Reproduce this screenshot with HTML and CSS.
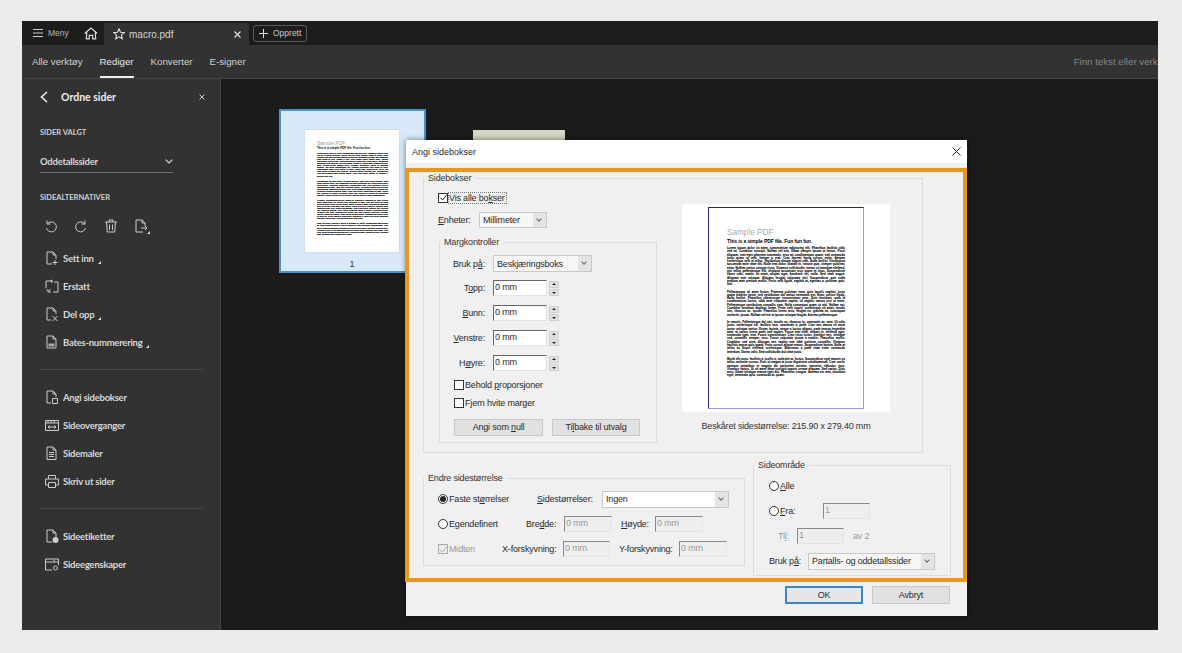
FILE: index.html
```html
<!DOCTYPE html>
<html lang="nb">
<head>
  <meta charset="UTF-8">
  <title>macro.pdf - Angi sidebokser</title>
  <link rel="stylesheet" href="styles.css">
</head>
<body>

<div class="app">

  <!-- Fanelinje -->
  <div class="topbar">
    <svg class="ico-menu" width="10" height="8" viewBox="0 0 10 8"><path d="M0 .5h10M0 4h10M0 7.500h10" stroke="#ccc" fill="none"/></svg>
    <span class="menu-text">Meny</span>
    <svg class="ico-home" width="14" height="13" viewBox="0 0 14 13"><path d="M.7 6.500 7 1l6.300 5.500M2.800 5.500 2.300 11.800h3V8.300h3.400v3.500h3l-.5-6.300" stroke="#ddd" stroke-width="1.200" fill="none"/></svg>
    <div class="tab">
      <svg width="12" height="12" viewBox="0 0 12 12"><path d="M6 .8 7.500 4.300l3.800.3-2.900 2.500.9 3.700L6 8.800l-3.300 2 .9-3.700L.7 4.600l3.800-.3z" stroke="#ddd" stroke-width="1.100" fill="none"/></svg>
      <span class="tab-name">macro.pdf</span>
      <svg class="tab-close" width="7" height="7" viewBox="0 0 7 7"><path d="M.5.5l6 6M6.500.5l-6 6" stroke="#ddd" stroke-width="1.200"/></svg>
    </div>
    <div class="create-btn">
      <svg width="9" height="9" viewBox="0 0 9 9"><path d="M4.500 0v9M0 4.500h9" stroke="#ddd"/></svg>
      <span>Opprett</span>
    </div>
  </div>

  <!-- Verktøylinje -->
  <div class="toolbar">
    <span class="tool">Alle verktøy</span>
    <span class="tool tool-active">Rediger</span>
    <span class="tool">Konverter</span>
    <span class="tool">E-signer</span>
    <span class="search">Finn tekst eller verktøy</span>
  </div>

  <div class="workspace">

    <!-- Sidepanel -->
    <aside class="sidebar">
      <div class="side-head">
        <svg width="8" height="12" viewBox="0 0 8 12"><path d="M7 1 1.500 6 7 11" stroke="#eee" stroke-width="1.600" fill="none"/></svg>
        <span class="side-title">Ordne sider</span>
        <svg class="side-close" width="6" height="6" viewBox="0 0 6 6"><path d="M.5.5l5 5M5.500.5l-5 5" stroke="#ccc"/></svg>
      </div>

      <div class="side-label first">SIDER VALGT</div>
      <div class="side-select">
        <span>Oddetallssider</span>
        <svg width="8" height="5" viewBox="0 0 8 5"><path d="M.7.7 4 4l3.300-3.300" stroke="#ddd" stroke-width="1.200" fill="none"/></svg>
      </div>

      <div class="side-label second">SIDEALTERNATIVER</div>
      <div class="side-icons">
        <svg width="14" height="14" viewBox="0 0 14 14"><path d="M3 1.500v3.500h3.500M3.300 5A5 5 0 1 1 2.500 9" stroke="#ccc" fill="none"/></svg>
        <svg width="14" height="14" viewBox="0 0 14 14"><path d="M11 1.500v3.500H7.500M10.700 5A5 5 0 1 0 11.500 9" stroke="#ccc" fill="none"/></svg>
        <svg width="14" height="14" viewBox="0 0 14 14"><path d="M1 3h12M5 3V1h4v2M2.500 3l.8 10h7.400l.8-10M5.500 5.500v5.500M8.500 5.500v5.500" stroke="#ccc" fill="none"/></svg>
        <svg width="16" height="15" viewBox="0 0 16 15"><path d="M9 13H2V1h6l3 3v3M8 1v3h3M7 9h6M11 7l2 2-2 2" stroke="#ccc" fill="none"/><path d="M16 12v3h-3z" fill="#ddd"/></svg>
      </div>

      <ul class="side-list">
        <li>
          <svg width="14" height="15" viewBox="0 0 14 15"><path d="M7 13H2V1h6l3 3v4M8 1v3h3M10 9v5M7.500 11.500h5" stroke="#ccc" fill="none"/></svg>
          <span class="more">Sett inn</span>
        </li>
        <li>
          <svg width="14" height="15" viewBox="0 0 14 15"><path d="M1 9V2h6M5 2l2-1v3M9 3h4v10H8M3 11v2h3M1.500 10l2 2 2-2" stroke="#ccc" fill="none"/></svg>
          <span>Erstatt</span>
        </li>
        <li>
          <svg width="14" height="15" viewBox="0 0 14 15"><path d="M6 13H2V1h6l3 3v3M8 1v3h3M7.500 9l5 5M12.500 9l-5 5" stroke="#ccc" fill="none"/></svg>
          <span class="more">Del opp</span>
        </li>
        <li>
          <svg width="14" height="15" viewBox="0 0 14 15"><path d="M11 13H2V1h6l3 3zM8 1v3h3" stroke="#ccc" fill="none"/><path d="M3.500 8.500h6v3h-6z" fill="#aaa"/></svg>
          <span class="more">Bates-nummerering</span>
        </li>
      </ul>
      <div class="side-rule"></div>

      <ul class="side-list">
        <li>
          <svg width="14" height="15" viewBox="0 0 14 15"><path d="M6 13H2V1h6l3 3v3M8 1v3h3M7.500 8.500h5v5h-5z" stroke="#ccc" fill="none"/></svg>
          <span>Angi sidebokser</span>
        </li>
        <li>
          <svg width="14" height="15" viewBox="0 0 14 15"><path d="M.5 2.500h13v10H.5zM.5 5h13M3 2.500V5M6 2.500V5M9 2.500V5M3 9h8M5 7.500 3 9l2 1.500M9 7.500 11 9l-2 1.500" stroke="#ccc" fill="none"/></svg>
          <span>Sideoverganger</span>
        </li>
        <li>
          <svg width="14" height="15" viewBox="0 0 14 15"><path d="M2 1h6l3 3v9.500H2zM8 1v3h3M4 6.500h5M4 8.500h5M4 10.500h5" stroke="#ccc" fill="none"/></svg>
          <span>Sidemaler</span>
        </li>
        <li>
          <svg width="14" height="15" viewBox="0 0 14 15"><path d="M3.500 5V1.500h7V5M3 11H.5V5h13v6H11M3.500 8.500h7v5h-7z" stroke="#ccc" fill="none"/></svg>
          <span>Skriv ut sider</span>
        </li>
      </ul>
      <div class="side-rule"></div>

      <ul class="side-list">
        <li>
          <svg width="14" height="15" viewBox="0 0 14 15"><path d="M7 13H2V1h6l3 3v4M8 1v3h3" stroke="#ccc" fill="none"/><circle cx="10.500" cy="11" r="3" fill="#ccc"/></svg>
          <span>Sideetiketter</span>
        </li>
        <li>
          <svg width="14" height="15" viewBox="0 0 14 15"><path d="M7 13H.5V2h13v6M.5 5h13M9 2.500V5" stroke="#ccc" fill="none"/><circle cx="10.500" cy="11" r="2" stroke="#ccc" fill="none"/></svg>
          <span>Sideegenskaper</span>
        </li>
      </ul>
    </aside>

    <!-- Sideoversikt -->
    <main class="pages">
      <div class="thumb">
        <div class="thumb-page">
          <div class="pdf-title">Sample PDF</div>
          <div class="pdf-sub">This is a simple PDF file. Fun fun fun.</div>
          <p>Lorem ipsum dolor sit amet, consectetuer adipiscing elit. Phasellus facilisis odio sed mi. Curabitur suscipit. Nullam vel nisi. Etiam semper ipsum ut lectus. Proin aliquam, erat eget pharetra commodo, eros mi condimentum quam, sed commodo justo quam ut velit. Integer a erat. Cras laoreet ligula cursus enim. Aenean scelerisque velit et tellus. Vestibulum dictum aliquet sem. Nulla facilisi. Vestibulum accumsan ante vitae elit. Nulla erat dolor, blandit in, rutrum quis, semper pulvinar, enim. Nullam varius congue risus. Vivamus sollicitudin, metus ut interdum eleifend, nisi tellus pellentesque elit, tristique accumsan eros quam et risus. Suspendisse libero odio, mattis sit amet, aliquet eget, hendrerit vel, nulla. Sed vitae augue. Aliquam erat volutpat. Aliquam feugiat vulputate nisl. Suspendisse quis nulla pretium ante pretium mollis. Proin velit ligula, sagittis at, egestas a, pulvinar quis, nisl.</p>
          <p>Pellentesque sit amet lectus. Praesent pulvinar, nunc quis iaculis sagittis, justo quam lobortis tortor, sed vestibulum dui metus venenatis est. Nunc cursus ligula. Nulla facilisi. Phasellus ullamcorper consectetuer ante. Duis tincidunt, urna id condimentum luctus, nibh ante vulputate sapien, id sagittis massa orci ut enim. Pellentesque vestibulum convallis sem. Nulla consequat quam ut nisl. Nullam est. Curabitur tincidunt dapibus lorem. Proin velit turpis, scelerisque sit amet, iaculis nec, rhoncus ac, ipsum. Phasellus lorem arcu, feugiat eu, gravida eu, consequat molestie, ipsum. Nullam vel est ut ipsum volutpat feugiat. Aenean pellentesque.</p>
          <p>In mauris. Pellentesque dui nisi, iaculis eu, rhoncus in, venenatis ac, ante. Ut odio justo, scelerisque vel, facilisis non, commodo a, pede. Cras nec massa sit amet tortor volutpat varius. Donec lacinia, neque a luctus aliquet, pede massa imperdiet ante, at varius lorem pede sed sapien. Fusce erat nibh, aliquet in, eleifend eget, commodo eget, erat. Fusce consectetuer. Cras risus tortor, porttitor nec, tristique sed, convallis semper, eros. Fusce vulputate ipsum a mauris. Phasellus mollis. Curabitur sed urna. Aliquam nec sapien non nibh pulvinar convallis. Vivamus facilisis augue quis quam. Proin cursus aliquet metus. Suspendisse lacinia. Nulla at tellus ac turpis eleifend scelerisque. Maecenas a pede vitae enim commodo interdum. Donec odio. Sed sollicitudin dui vitae justo.</p>
          <p>Morbi elit nunc, facilisis a, mollis a, molestie at, lectus. Suspendisse eget mauris eu tellus molestie cursus. Duis ut magna at justo dignissim condimentum. Cum sociis natoque penatibus et magnis dis parturient montes, nascetur ridiculus mus. Vivamus varius. Ut sit amet diam suscipit mauris ornare aliquam. Sed varius. Duis arcu. Etiam tristique massa eget dui. Phasellus congue. Aenean est erat, tincidunt eget, venenatis quis, commodo at, quam.</p>
        </div>
        <div class="thumb-no">1</div>
      </div>
      <div class="thumb-next"></div>
    </main>
  </div>

  <!-- Dialogvindu -->
  <div class="dialog">
    <div class="dialog-title">
      <span>Angi sidebokser</span>
      <svg width="9" height="9" viewBox="0 0 9 9"><path d="M.5.5l8 8M8.500.5l-8 8" stroke="#222"/></svg>
    </div>

    <div class="dialog-body">
      <fieldset class="group group-boxes">
        <legend>Sidebokser</legend>
        <div class="boxes-row">
          <div class="boxes-left">
            <div class="row row-show">
              <span class="check on"><svg width="9" height="9" viewBox="0 0 9 9"><path d="M1 4.500 3.500 7 8 1.500" stroke="#333" fill="none"/></svg></span>
              <span class="focus-label">Vis alle bo<u>k</u>ser</span>
            </div>
            <div class="row row-units">
              <span class="lbl-units"><u>E</u>nheter:</span>
              <div class="select sel-units"><span>Millimeter</span><b class="arrow"></b></div>
            </div>
            <fieldset class="group group-margins">
              <legend>Margkontroller</legend>
              <div class="row first-row">
                <span class="lbl-margin">Bruk p<u>å</u>:</span>
                <div class="select sel-apply"><span>Beskjæringsboks</span><b class="arrow"></b></div>
              </div>
              <div class="row field-row">
                <span class="lbl-margin">T<u>o</u>pp:</span>
                <div class="input in-margin">0 mm</div>
                <div class="spin"><i class="up"></i><i class="down"></i></div>
              </div>
              <div class="row field-row">
                <span class="lbl-margin"><u>B</u>unn:</span>
                <div class="input in-margin">0 mm</div>
                <div class="spin"><i class="up"></i><i class="down"></i></div>
              </div>
              <div class="row field-row">
                <span class="lbl-margin"><u>V</u>enstre:</span>
                <div class="input in-margin">0 mm</div>
                <div class="spin"><i class="up"></i><i class="down"></i></div>
              </div>
              <div class="row field-row">
                <span class="lbl-margin">H<u>ø</u>yre:</span>
                <div class="input in-margin">0 mm</div>
                <div class="spin"><i class="up"></i><i class="down"></i></div>
              </div>
              <div class="row check-row keep">
                <span class="check"></span><span class="check-text">Behold <u>p</u>roporsjoner</span>
              </div>
              <div class="row check-row trim">
                <span class="check"></span><span class="check-text">F<u>j</u>ern hvite marger</span>
              </div>
              <div class="row btn-row">
                <div class="btn btn-null">Angi som <u>n</u>ull</div>
                <div class="btn btn-back">Ti<u>l</u>bake til utvalg</div>
              </div>
            </fieldset>
          </div>

          <div class="preview-col">
            <div class="preview">
              <div class="preview-page">
                <div class="pdf-title">Sample PDF</div>
                <div class="pdf-sub">This is a simple PDF file. Fun fun fun.</div>
                <p>Lorem ipsum dolor sit amet, consectetuer adipiscing elit. Phasellus facilisis odio sed mi. Curabitur suscipit. Nullam vel nisi. Etiam semper ipsum ut lectus. Proin aliquam, erat eget pharetra commodo, eros mi condimentum quam, sed commodo justo quam ut velit. Integer a erat. Cras laoreet ligula cursus enim. Aenean scelerisque velit et tellus. Vestibulum dictum aliquet sem. Nulla facilisi. Vestibulum accumsan ante vitae elit. Nulla erat dolor, blandit in, rutrum quis, semper pulvinar, enim. Nullam varius congue risus. Vivamus sollicitudin, metus ut interdum eleifend, nisi tellus pellentesque elit, tristique accumsan eros quam et risus. Suspendisse libero odio, mattis sit amet, aliquet eget, hendrerit vel, nulla. Sed vitae augue. Aliquam erat volutpat. Aliquam feugiat vulputate nisl. Suspendisse quis nulla pretium ante pretium mollis. Proin velit ligula, sagittis at, egestas a, pulvinar quis, nisl.</p>
                <p>Pellentesque sit amet lectus. Praesent pulvinar, nunc quis iaculis sagittis, justo quam lobortis tortor, sed vestibulum dui metus venenatis est. Nunc cursus ligula. Nulla facilisi. Phasellus ullamcorper consectetuer ante. Duis tincidunt, urna id condimentum luctus, nibh ante vulputate sapien, id sagittis massa orci ut enim. Pellentesque vestibulum convallis sem. Nulla consequat quam ut nisl. Nullam est. Curabitur tincidunt dapibus lorem. Proin velit turpis, scelerisque sit amet, iaculis nec, rhoncus ac, ipsum. Phasellus lorem arcu, feugiat eu, gravida eu, consequat molestie, ipsum. Nullam vel est ut ipsum volutpat feugiat. Aenean pellentesque.</p>
                <p>In mauris. Pellentesque dui nisi, iaculis eu, rhoncus in, venenatis ac, ante. Ut odio justo, scelerisque vel, facilisis non, commodo a, pede. Cras nec massa sit amet tortor volutpat varius. Donec lacinia, neque a luctus aliquet, pede massa imperdiet ante, at varius lorem pede sed sapien. Fusce erat nibh, aliquet in, eleifend eget, commodo eget, erat. Fusce consectetuer. Cras risus tortor, porttitor nec, tristique sed, convallis semper, eros. Fusce vulputate ipsum a mauris. Phasellus mollis. Curabitur sed urna. Aliquam nec sapien non nibh pulvinar convallis. Vivamus facilisis augue quis quam. Proin cursus aliquet metus. Suspendisse lacinia. Nulla at tellus ac turpis eleifend scelerisque. Maecenas a pede vitae enim commodo interdum. Donec odio. Sed sollicitudin dui vitae justo.</p>
                <p>Morbi elit nunc, facilisis a, mollis a, molestie at, lectus. Suspendisse eget mauris eu tellus molestie cursus. Duis ut magna at justo dignissim condimentum. Cum sociis natoque penatibus et magnis dis parturient montes, nascetur ridiculus mus. Vivamus varius. Ut sit amet diam suscipit mauris ornare aliquam. Sed varius. Duis arcu. Etiam tristique massa eget dui. Phasellus congue. Aenean est erat, tincidunt eget, venenatis quis, commodo at, quam.</p>
              </div>
            </div>
            <div class="preview-caption">Beskåret sidestørrelse: 215.90 x 279.40 mm</div>
          </div>
        </div>
      </fieldset>

      <div class="bottom-row">
        <fieldset class="group group-size">
          <legend>Endre sidestørrelse</legend>
          <div class="row opt-row">
            <span class="cell c1"><span class="radio on"></span>Faste st<u>ø</u>rrelser</span>
            <span class="lbl-size"><u>S</u>idestørrelser:</span>
            <div class="select sel-size"><span>Ingen</span><b class="arrow"></b></div>
          </div>
          <div class="row opt-row">
            <span class="cell c2"><span class="radio"></span>E<u>g</u>endefinert</span>
            <span class="lbl-w">Bre<u>d</u>de:</span>
            <div class="input off in-w">0 mm</div>
            <span class="lbl-h"><u>H</u>øyde:</span>
            <div class="input off in-w">0 mm</div>
          </div>
          <div class="row opt-row">
            <span class="cell c3 dim"><span class="check on dim-box"><svg width="9" height="9" viewBox="0 0 9 9"><path d="M1 4.500 3.500 7 8 1.500" stroke="#aaa" fill="none"/></svg></span>Midten</span>
            <span class="lbl-x">X-forskyvning:</span>
            <div class="input off in-x">0 mm</div>
            <span class="lbl-y">Y-forskyvning:</span>
            <div class="input off in-w">0 mm</div>
          </div>
        </fieldset>

        <fieldset class="group group-range">
          <legend>Sideområde</legend>
          <div class="row opt-row">
            <span class="cell"><span class="radio"></span><u>A</u>lle</span>
          </div>
          <div class="row opt-row">
            <span class="cell c-from"><span class="radio"></span><u>F</u>ra:</span>
            <div class="input off in-x">1</div>
          </div>
          <div class="row opt-row">
            <span class="lbl-to dim">Ti<u>l</u>:</span>
            <div class="input off in-x">1</div>
            <span class="of dim">av 2</span>
          </div>
          <div class="row opt-row">
            <span class="lbl-range">Bruk p<u>å</u>:</span>
            <div class="select sel-range"><span>Partalls- og oddetallssider</span><b class="arrow"></b></div>
          </div>
        </fieldset>
      </div>

      <div class="dialog-foot">
        <div class="btn btn-ok">OK</div>
        <div class="btn btn-foot">Avbryt</div>
      </div>
    </div>
  </div>

  <!-- Oransje markering rundt innholdet -->
  <div class="highlight"></div>
</div>

</body>
</html>
```

FILE: styles.css
```css
/* Grunnstiler */
body {
  margin: 0;
  height: 653px;
  overflow: hidden;
  background-color: #ebebeb;
  font-family: "Liberation Sans", Arial, sans-serif;
  padding: 21px 24px 23px 22px;
  box-sizing: border-box;
}

.app {
  position: relative;
  width: 1136px;
  height: 609px;
  overflow: hidden;
  background-color: #1b1b1b;
  color: #ddd;
}

/* Fanelinje */
.topbar {
  height: 24px;
  display: flex;
  align-items: center;
  background-color: #1d1d1d;
  padding-left: 11px;
  box-sizing: border-box;
}

.menu-text {
  font-size: 8.500px;
  color: #b5b5b5;
  margin-left: 5px;
  width: 36px;
}

.ico-home {
  flex-shrink: 0;
}

.tab {
  align-self: flex-end;
  width: 145px;
  height: 22px;
  margin-left: 6px;
  background-color: #323232;
  display: flex;
  align-items: center;
  padding: 0 8px 0 9px;
  box-sizing: border-box;
}

.tab-name {
  font-size: 10px;
  color: #d5d5d5;
  margin-left: 4px;
}

.tab-close {
  margin-left: auto;
}

.create-btn {
  width: 54px;
  height: 17px;
  margin-left: 4px;
  border: 1px solid #5a5a5a;
  border-radius: 3px;
  box-sizing: border-box;
  display: flex;
  align-items: center;
  padding-left: 5px;
  font-size: 8.500px;
  color: #c8c8c8;
}

.create-btn span {
  margin-left: 5px;
}

/* Verktøylinje */
.toolbar {
  height: 34px;
  display: flex;
  background-color: #323232;
  border-bottom: 1px solid #444;
  box-sizing: border-box;
  padding-left: 10px;
  font-size: 9.700px;
  white-space: nowrap;
}

.tool {
  line-height: 33px;
  height: 33px;
  margin-right: 17px;
  color: #d0d0d0;
  box-sizing: border-box;
}

.tool-active {
  color: #e8e8e8;
  border-bottom: 2px solid #eee;
}

.search {
  line-height: 33px;
  color: #858585;
  margin-left: 811px;
  flex-shrink: 0;
}

.workspace {
  display: flex;
  height: 551px;
}

/* Sidepanel */
.sidebar {
  width: 199px;
  flex-shrink: 0;
  background-color: #323232;
  border-right: 1px solid #444;
  box-sizing: border-box;
  padding-left: 18px;
  font-family: Lato, "Noto Sans", sans-serif;
}

.side-head {
  display: flex;
  align-items: center;
  height: 12px;
  margin-top: 12px;
}

.side-title {
  font-size: 10.500px;
  font-weight: 700;
  color: #eee;
  margin-left: 13px;
  width: 74px;
}

.side-close {
  margin-left: 64px;
}

.side-label {
  font-size: 7.500px;
  font-weight: 700;
  color: #d0d0d0;
  line-height: 10px;
}

.side-label.first {
  margin-top: 25px;
}

.side-label.second {
  margin-top: 20px;
}

.side-select {
  width: 133px;
  height: 18px;
  margin-top: 17px;
  border-bottom: 1px solid #6c6c6c;
  display: flex;
  justify-content: space-between;
  align-items: flex-start;
  font-size: 9.500px;
  font-weight: 700;
  letter-spacing: -.25px;
  color: #d5d5d5;
  line-height: 13px;
  box-sizing: border-box;
}

.side-select svg {
  margin-top: 4px;
}

.side-icons {
  display: flex;
  gap: 16px;
  margin: 16px 0 0 4px;
  height: 15px;
}

.side-list {
  list-style: none;
  margin: 0;
  padding: 0;
}

.side-icons + .side-list {
  margin-top: 10px;
}

.side-list li {
  height: 28px;
  display: flex;
  align-items: center;
  padding-left: 5px;
  gap: 4px;
  font-size: 9.500px;
  font-weight: 700;
  letter-spacing: -.25px;
  color: #d8d8d8;
  white-space: nowrap;
}

.side-list svg {
  flex-shrink: 0;
}

.more {
  position: relative;
}

.more::after {
  content: "";
  position: absolute;
  right: -7px;
  bottom: 0;
  border-style: solid;
  border-width: 0 0 3px 3px;
  border-color: transparent transparent #ddd transparent;
}

.side-rule {
  width: 163px;
  height: 1px;
  margin: 13px 0;
  background-color: #484848;
}

/* Sideoversikt */
.pages {
  display: flex;
  align-items: flex-start;
  padding: 30px 0 0 58px;
}

.thumb {
  width: 147px;
  height: 164px;
  box-sizing: border-box;
  border: 2px solid #4b8fd0;
  background-color: #d8eafa;
  padding: 19px 0 0 24px;
}

.thumb-page {
  width: 94px;
  height: 122px;
  background-color: #fff;
  box-sizing: border-box;
  padding: 10px 11px 0 12px;
  color: #000;
  overflow: hidden;
  box-shadow: 0 0 2px rgba(0, 0, 0, .15);
}

.thumb-page .pdf-title {
  font-size: 5px;
  color: #999;
  line-height: 7px;
}

.thumb-page .pdf-sub {
  font-size: 3px;
  font-weight: 700;
  line-height: 3px;
  margin-bottom: 2px;
}

.thumb-page p {
  font-size: 1.800px;
  font-weight: 700;
  line-height: 2.050px;
  margin: 0 0 3px;
  text-align: justify;
  -webkit-text-stroke: .12px #000;
}

.thumb-no {
  width: 94px;
  margin-top: 7px;
  text-align: center;
  font-size: 9px;
  line-height: 11px;
  color: #333;
}

.thumb-next {
  width: 92px;
  height: 100px;
  margin: 21px 0 0 47px;
  background: linear-gradient(#d8d8c8, #bbbbaa);
}

/* Dialogvindu */
.dialog {
  position: absolute;
  left: 384px;
  top: 119px;
  width: 561px;
  height: 476px;
  background-color: #f0f0f0;
  color: #2a2a2a;
  font-size: 9px;
  letter-spacing: -.18px;
  box-shadow: 0 0 6px rgba(0, 0, 0, .5);
  white-space: nowrap;
}

.dialog-title {
  height: 23px;
  background-color: #fff;
  display: flex;
  align-items: center;
  justify-content: space-between;
  padding: 0 6px;
  box-sizing: border-box;
  letter-spacing: 0;
}

.dialog-body {
  padding: 9px 17px 0 17px;
}

.group {
  margin: 0;
  padding: 0;
  border: 1px solid #dcdcdc;
  min-width: 0;
}

.group legend {
  margin-left: 0;
  padding: 0 4px;
  line-height: 12px;
  color: #333;
}

.row {
  display: flex;
  align-items: center;
}

/* Sidebokser */
.group-boxes {
  width: 500px;
  box-sizing: border-box;
  padding-bottom: 9px;
}

.boxes-row {
  display: flex;
}

.boxes-left {
  width: 233px;
  padding-top: 8px;
  flex-shrink: 0;
}

.row-show {
  height: 11px;
  padding-left: 14px;
}

.focus-label {
  border: 1px dotted #777;
  line-height: 10px;
  padding-right: 1px;
}

.row-units {
  height: 16px;
  margin-top: 9px;
  padding-left: 14px;
}

.lbl-units {
  width: 41px;
}

.check {
  display: inline-flex;
  width: 10px;
  height: 10px;
  box-sizing: border-box;
  border: 1px solid #333;
  background-color: #fff;
  flex-shrink: 0;
  align-items: center;
  justify-content: center;
  margin-right: 1px;
}

.row-show .check {
  margin-right: 0;
}

.check svg {
  flex-shrink: 0;
}

.radio {
  display: inline-block;
  position: relative;
  width: 10px;
  height: 10px;
  box-sizing: border-box;
  border: 1px solid #333;
  border-radius: 50%;
  background-color: #fff;
  margin-right: 1px;
  flex-shrink: 0;
}

.radio.on::after {
  content: "";
  position: absolute;
  left: 1px;
  top: 1px;
  width: 6px;
  height: 6px;
  border-radius: 50%;
  background-color: #222;
}

.select {
  display: flex;
  align-items: center;
  justify-content: space-between;
  box-sizing: border-box;
  border: 1px solid #c8c8c8;
  background-color: #f6f6f6;
  height: 17px;
  padding-left: 3px;
  flex-shrink: 0;
}

.arrow {
  position: relative;
  width: 13px;
  height: 100%;
  background-color: #e4e4e4;
  flex-shrink: 0;
}

.arrow::after {
  content: "";
  position: absolute;
  left: 4px;
  top: 4px;
  width: 3px;
  height: 3px;
  border-right: 1px solid #666;
  border-bottom: 1px solid #666;
  transform: rotate(45deg);
}

.sel-units {
  width: 68px;
  height: 16px;
}

.group-margins {
  width: 218px;
  box-sizing: border-box;
  margin: 8px 0 0 15px;
  padding-bottom: 6px;
}

.field-row {
  height: 16px;
  margin-top: 9px;
}

.first-row {
  height: 17px;
  margin-top: 7px;
}

.first-row + .field-row {
  margin-top: 8px;
}

.lbl-margin {
  width: 45px;
  margin-right: 8px;
  text-align: right;
}

.sel-apply {
  width: 99px;
}

.input {
  height: 16px;
  box-sizing: border-box;
  border-style: solid;
  border-width: 1px;
  border-color: #666 #e2e2e2 #e2e2e2 #666;
  background-color: #fff;
  padding-left: 1px;
  line-height: 13px;
  flex-shrink: 0;
}

.input.off {
  background-color: #eee;
  color: #999;
  border-color: #888 #e4e4e4 #e4e4e4 #888;
}

.in-margin {
  width: 54px;
}

.spin {
  display: flex;
  flex-direction: column;
  gap: 1px;
  margin-left: 2px;
}

.spin i {
  position: relative;
  display: block;
  width: 10px;
  height: 7px;
  background-color: #e1e1e1;
  border: 1px solid #d0d0d0;
  box-sizing: border-box;
}

.spin i::after {
  content: "";
  position: absolute;
  left: 2px;
  border-left: 2px solid transparent;
  border-right: 2px solid transparent;
}

.spin .up::after {
  top: 1px;
  border-bottom: 2px solid #222;
}

.spin .down::after {
  top: 2px;
  border-top: 2px solid #222;
}

.check-row {
  height: 10px;
  padding-left: 14px;
}

.keep {
  margin-top: 9px;
}

.trim {
  margin-top: 8px;
}

.btn {
  height: 17px;
  box-sizing: border-box;
  border: 1px solid #c8c8c8;
  background-color: #e1e1e1;
  text-align: center;
  line-height: 15px;
  flex-shrink: 0;
}

.btn-row {
  margin-top: 11px;
  padding-left: 14px;
  gap: 9px;
}

.btn-null {
  width: 89px;
}

.btn-back {
  width: 88px;
}

/* Forhåndsvisning */
.preview-col {
  margin: 20px 0 0 25px;
  width: 208px;
  flex-shrink: 0;
}

.preview {
  height: 208px;
  background-color: #fff;
  display: flex;
  justify-content: center;
  align-items: center;
}

.preview-page {
  width: 156px;
  height: 202px;
  box-sizing: border-box;
  border-style: solid;
  border-width: 1px;
  border-color: #26267a #9999dd #9999dd #26267a;
  padding: 20px 18px 0 18px;
  background-color: #fff;
  color: #000;
  white-space: normal;
  overflow: hidden;
  letter-spacing: 0;
}

.preview-page .pdf-title {
  font-size: 8.200px;
  color: #aaa;
  line-height: 10px;
}

.preview-page .pdf-sub {
  font-size: 5px;
  font-weight: 700;
  letter-spacing: -.1px;
  line-height: 5px;
  margin-top: 1px;
}

.preview-page p {
  font-size: 2.950px;
  font-weight: 700;
  line-height: 3.300px;
  margin: 3px 0 4px;
  text-align: justify;
  -webkit-text-stroke: .08px #000;
}

.preview-caption {
  margin-top: 8px;
  text-align: center;
  line-height: 12px;
  color: #333;
}

/* Nederste grupper */
.bottom-row {
  display: flex;
  align-items: flex-start;
  gap: 8px;
  margin-top: 6px;
}

.group-size {
  width: 322px;
  flex-shrink: 0;
  box-sizing: border-box;
  margin-top: 13px;
  padding-bottom: 8px;
}

.group-size .opt-row {
  padding-left: 14px;
}

.group-range {
  width: 198px;
  flex-shrink: 0;
  box-sizing: border-box;
  padding-bottom: 6px;
}

.group-range .opt-row {
  padding-left: 15px;
}

.opt-row {
  height: 16px;
  margin-top: 9px;
}

.group legend + .opt-row {
  margin-top: 7px;
}

.cell {
  display: flex;
  align-items: center;
  flex-shrink: 0;
}

.c1 { width: 99px; }
.c2 { width: 88px; }
.c3 { width: 64px; }
.c-from { width: 54px; }

.dim {
  color: #999;
}

.dim-box {
  border-color: #aaa;
  background-color: #eee;
}

.lbl-size { width: 65px; }
.lbl-w { width: 38px; }
.lbl-h { width: 34px; margin-left: 9px; }
.lbl-x { width: 61px; }
.lbl-y { width: 60px; margin-left: 9px; }
.lbl-to { width: 19px; margin-left: 9px; }
.lbl-range { width: 39px; }
.of { margin-left: 9px; }

.sel-size,
.sel-range {
  width: 127px;
}

.sel-size {
  background-color: #fff;
}

.in-w { width: 48px; }
.in-x { width: 47px; }

.dialog-foot {
  display: flex;
  justify-content: flex-end;
  gap: 9px;
  margin-top: 10px;
}

.btn-ok,
.btn-foot {
  width: 78px;
  height: 18px;
  line-height: 16px;
}

.btn-ok {
  border: 2px solid #3c87c4;
  line-height: 14px;
  background-color: #e6e6e6;
}

/* Oransje markering */
.highlight {
  position: absolute;
  left: 383px;
  top: 147px;
  width: 562px;
  height: 414px;
  box-sizing: border-box;
  border: 4px solid #e8961f;
  pointer-events: none;
}
```
